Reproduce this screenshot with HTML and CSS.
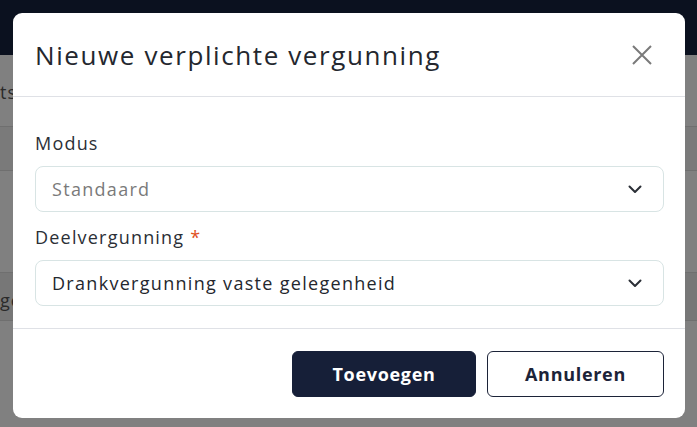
FILE: index.html
```html
<!DOCTYPE html>
<html lang="nl">
<head>
<meta charset="utf-8">
<title>Nieuwe verplichte vergunning</title>
<link rel="stylesheet" href="styles.css">
</head>
<body>
<div class="page">
  <div class="topbar"></div>
  <div class="content">
    <div class="row row-a"><span class="bg-text">ts</span></div>
    <div class="row row-b"></div>
    <div class="row row-c"></div>
    <div class="row row-d"><span class="bg-text">ge</span></div>
    <div class="row row-e"></div>
  </div>
</div>
<div class="overlay">
  <div class="modal">
    <div class="modal-header">
      <h1 class="modal-title">Nieuwe verplichte vergunning</h1>
      <button class="close" aria-label="Sluiten">
        <svg width="20" height="20" viewBox="0 0 20 20"><path d="M1 1 L19 19 M19 1 L1 19" stroke="#7a7a7a" stroke-width="2" fill="none"/></svg>
      </button>
    </div>
    <div class="modal-body">
      <div class="field">
        <label class="label">Modus</label>
        <div class="select">
          <span class="select-value muted">Standaard</span>
          <svg class="chev" width="14" height="9" viewBox="0 0 14 9"><path d="M1.5 1.5 L7 7 L12.5 1.5" stroke="#2b2f36" stroke-width="2" fill="none" stroke-linecap="round" stroke-linejoin="round"/></svg>
        </div>
      </div>
      <div class="field">
        <label class="label">Deelvergunning <span class="req">*</span></label>
        <div class="select">
          <span class="select-value">Drankvergunning vaste gelegenheid</span>
          <svg class="chev" width="14" height="9" viewBox="0 0 14 9"><path d="M1.5 1.5 L7 7 L12.5 1.5" stroke="#2b2f36" stroke-width="2" fill="none" stroke-linecap="round" stroke-linejoin="round"/></svg>
        </div>
      </div>
    </div>
    <div class="modal-footer">
      <button class="btn btn-primary">Toevoegen</button>
      <button class="btn btn-outline">Annuleren</button>
    </div>
  </div>
</div>
</body>
</html>
```
FILE: styles.css
```css
* { box-sizing: border-box; }
html, body { margin: 0; padding: 0; }
body {
  width: 697px;
  height: 427px;
  overflow: hidden;
  font-family: "Open Sans", "Noto Sans", sans-serif;
  background: #808080;
  position: relative;
}
.page { display: flex; flex-direction: column; }
.topbar { height: 55px; background: #0b111f; }
.content { display: flex; flex-direction: column; }
.row { border-bottom: 1px solid #6f6f6f; overflow: hidden; }
.row-a { height: 72px; background: #808080; padding-top: 25px; }
.row-b { height: 44px; background: #7a7a7a; }
.row-c { height: 102px; background: #808080; }
.row-d { height: 48px; background: #777777; padding-top: 15px; }
.row-e { height: 60px; background: #808080; border-bottom: none; }
.bg-text { display: block; font-size: 18px; line-height: 24px; color: #2a2a2a; letter-spacing: 1px; }

.overlay { position: absolute; inset: 0; }
.modal {
  position: absolute;
  left: 13px;
  top: 13px;
  width: 672px;
  height: 405px;
  background: #fff;
  border-radius: 9px;
  display: flex;
  flex-direction: column;
  color: #2b2f36;
}
.modal-header {
  height: 84px;
  flex: none;
  display: flex;
  align-items: center;
  justify-content: space-between;
  padding: 0 33px 0 22px;
  border-bottom: 1px solid #dfe1e6;
}
.modal-title {
  margin: 0;
  font-size: 26px;
  font-weight: 500;
  color: #24272e;
  letter-spacing: 1.6px;
}
.close {
  border: 0;
  background: none;
  padding: 0;
  width: 20px;
  height: 20px;
  display: flex;
}
.modal-body {
  flex: 1;
  padding: 34px 21px 0 22px;
  display: flex;
  flex-direction: column;
  gap: 13px;
  border-bottom: 1px solid #dfe1e6;
}
.field { display: flex; flex-direction: column; gap: 11px; }
.label { font-size: 18px; line-height: 24px; color: #2b2f36; letter-spacing: 1.2px; }
.req { color: #e0501c; }
.select {
  height: 46px;
  border: 1px solid #d8e4e4;
  border-radius: 8px;
  display: flex;
  align-items: center;
  justify-content: space-between;
  padding: 0 21px 0 16px;
}
.select-value { font-size: 18px; color: #24272e; letter-spacing: 1.3px; }
.select-value.muted { color: #7a7a7a; }
.modal-footer {
  height: 89px;
  flex: none;
  display: flex;
  justify-content: flex-end;
  align-items: center;
  gap: 11px;
  padding: 1px 21px 0 0;
}
.btn {
  height: 46px;
  border-radius: 6px;
  font-family: "Open Sans", "Noto Sans", sans-serif;
  font-size: 18px;
  font-weight: 700;
  letter-spacing: 0.7px;
}
.btn-primary { width: 184px; background: #161f38; color: #fff; border: 1px solid #161f38; }
.btn-outline { width: 177px; background: #fff; color: #1c2338; border: 1px solid #1c2338; }
```
